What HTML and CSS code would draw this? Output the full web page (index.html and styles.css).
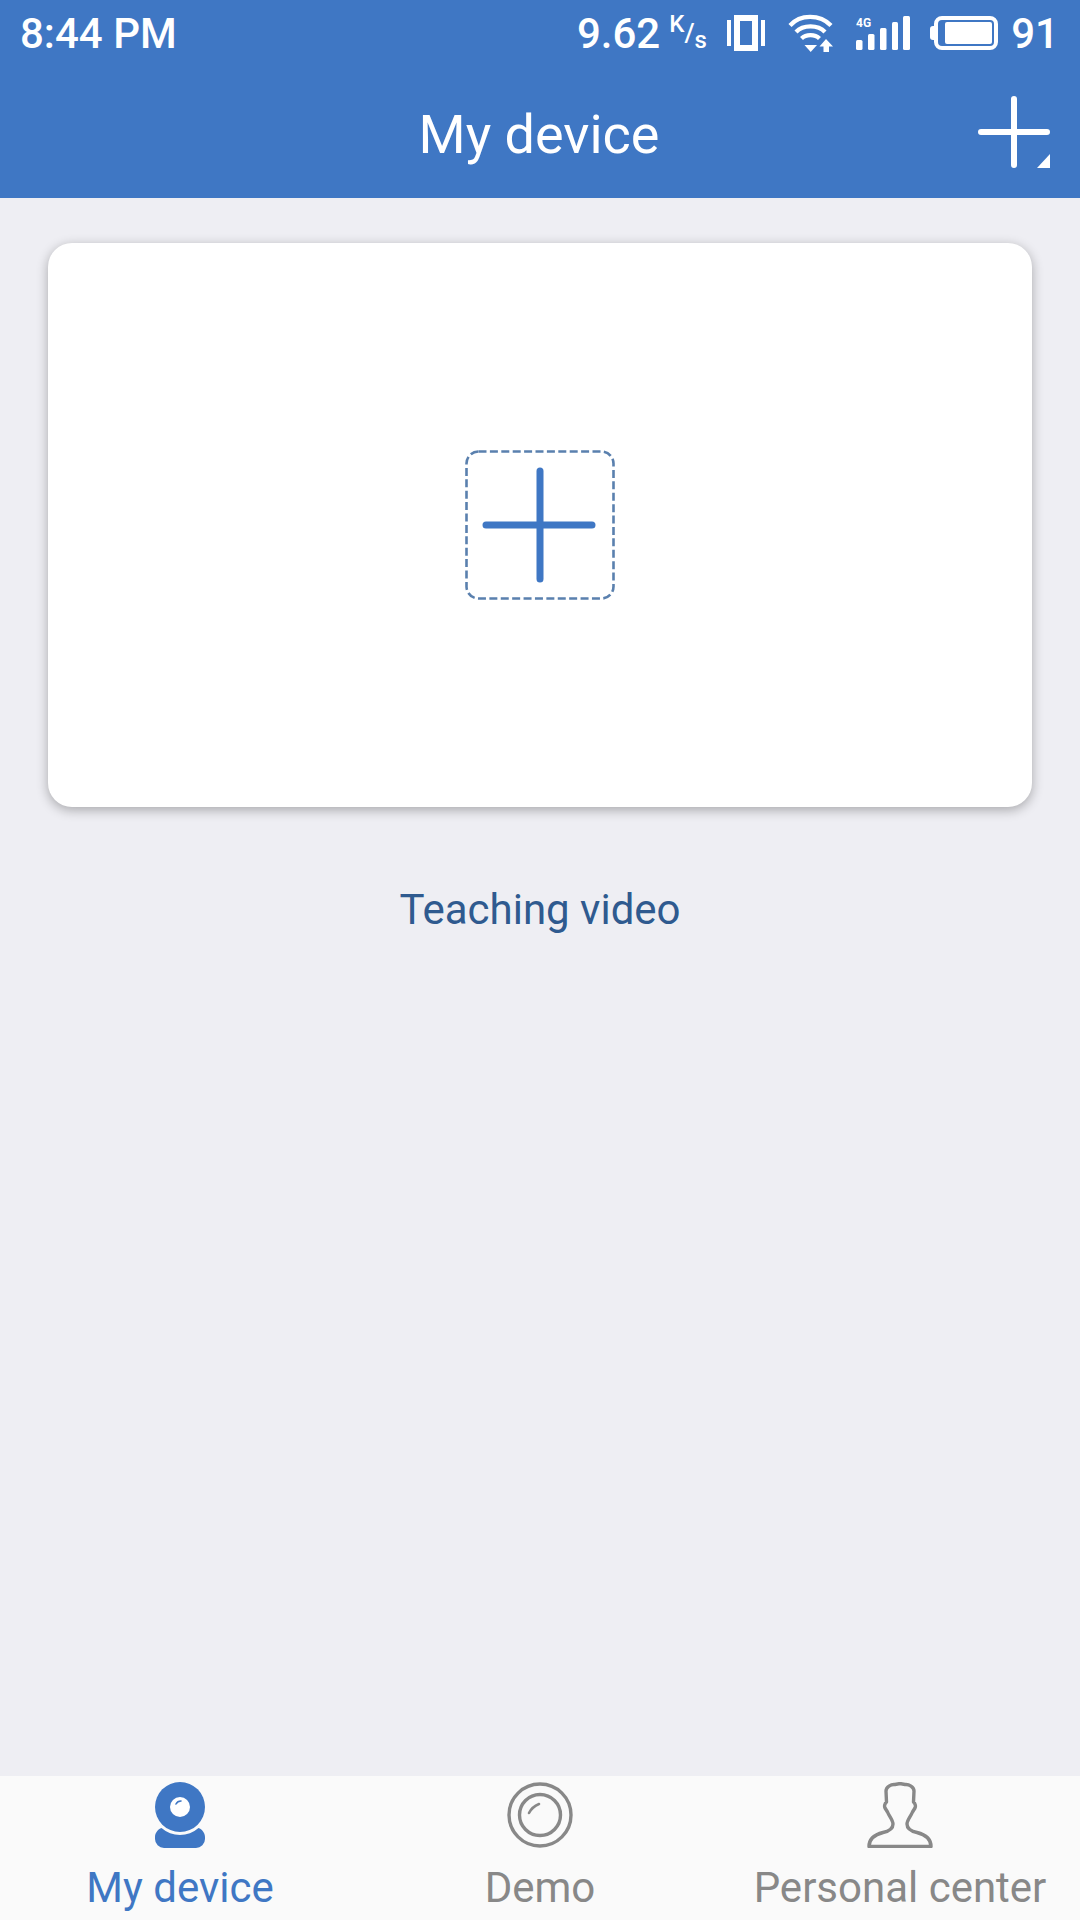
FILE: index.html
```html
<!DOCTYPE html>
<html lang="en">
<head>
    <meta charset="UTF-8">
    <title>My device</title>
    <link rel="stylesheet" href="styles.css">
</head>
<body>
    <div class="app">
        <header class="top">
            <div class="status">
                <span class="time">8:44 PM</span>
                <div class="status-right">
                    <span class="speed">9.62</span>
                    <span class="unit"><sup>K</sup>/<sub>s</sub></span>
                    <svg class="ic-vibrate" width="38" height="36" viewBox="0 0 38 36">
                        <rect x="0" y="5" width="4" height="26" fill="#fff"/>
                        <rect x="10" y="3" width="18" height="30" fill="none" stroke="#fff" stroke-width="6"/>
                        <rect x="34" y="5" width="4" height="26" fill="#fff"/>
                    </svg>
                    <svg class="ic-wifi" width="46" height="38" viewBox="0 0 46 38">
                        <g fill="none" stroke="#fff" stroke-width="4.2">
                            <path d="M2 11.5C12 0 32 0 43 11.5"/>
                            <path d="M8 18C15 10.5 30 10.5 37 18"/>
                            <path d="M13.5 24.5C18 20 27 20 31.5 24.5"/>
                        </g>
                        <path d="M16.5 31H29L22.7 38Z" fill="#fff"/>
                        <path d="M38 25L45 32.5H41V38H35.5V32.5H31.5Z" fill="#fff"/>
                    </svg>
                    <svg class="ic-signal" width="54" height="34" viewBox="0 0 54 34">
                        <text class="ic-4g" x="0" y="11">4G</text>
                        <rect x="0" y="24" width="6.5" height="10" rx="1.5" fill="#fff"/>
                        <rect x="12" y="18" width="6.5" height="16" rx="1.5" fill="#fff"/>
                        <rect x="24" y="12" width="6.5" height="22" rx="1.5" fill="#fff"/>
                        <rect x="36" y="6" width="6" height="28" rx="1.5" fill="#fff"/>
                        <rect x="47" y="0" width="7" height="34" rx="1.5" fill="#fff"/>
                    </svg>
                    <svg class="ic-battery" width="68" height="34" viewBox="0 0 68 34">
                        <path d="M4 10H3A3 3 0 0 0 0 13V21A3 3 0 0 0 3 24H4Z" fill="#fff"/>
                        <rect x="6" y="2" width="60" height="30" rx="6" fill="none" stroke="#fff" stroke-width="4"/>
                        <rect x="15" y="6" width="47" height="22" rx="2" fill="#fff"/>
                    </svg>
                    <span class="level">91</span>
                </div>
            </div>
            <nav class="navbar">
                <h1 class="title">My device</h1>
                <svg class="nav-add" width="72" height="72" viewBox="0 0 72 72">
                    <path d="M36 3V69M3 36H69" fill="none" stroke="#fff" stroke-width="6" stroke-linecap="round"/>
                    <path d="M72 58V72H59Z" fill="#fff"/>
                </svg>
            </nav>
        </header>

        <main class="content">
            <div class="card">
                <svg width="150" height="150" viewBox="0 0 150 150">
                    <rect x="1.5" y="1.5" width="147" height="147" rx="12" fill="none" stroke="#5a80ae" stroke-width="2.6" stroke-dasharray="8 3.4"/>
                    <path d="M75 21V129M21 75H127" fill="none" stroke="#3f77c4" stroke-width="7" stroke-linecap="round"/>
                </svg>
            </div>
            <a class="video-link">Teaching video</a>
        </main>

        <footer class="tabs">
            <div class="tab tab-active">
                <svg width="50" height="66" viewBox="0 0 50 66">
                    <circle cx="25" cy="25" r="25" fill="#3f77c4"/>
                    <circle cx="25" cy="25" r="10" fill="#fff"/>
                    <path d="M21 22C22 20 24 19 26 19" fill="none" stroke="#3f77c4" stroke-width="1.6" stroke-linecap="round"/>
                    <path d="M6.5 46A28 28 0 0 0 43.5 46C47 47 50 51 50 55V57A9 9 0 0 1 41 66H9A9 9 0 0 1 0 57V55C0 51 3 47 6.5 46Z" fill="#3f77c4"/>
                </svg>
                <span class="tab-label">My device</span>
            </div>
            <div class="tab">
                <svg width="66" height="66" viewBox="0 0 66 66">
                    <g fill="none" stroke="#888" stroke-width="3.4">
                        <circle cx="33" cy="33" r="31"/>
                        <circle cx="33" cy="33" r="20.5"/>
                    </g>
                    <path d="M22 31C24 27 27 24 32 22" fill="none" stroke="#888" stroke-width="2.6" stroke-linecap="round"/>
                </svg>
                <span class="tab-label">Demo</span>
            </div>
            <div class="tab">
                <svg width="66" height="66" viewBox="0 0 66 66">
                    <path d="M2 64.5C2 56 8 52.5 16 50.5C23 49 26 46 26 42C26 38 22 34 20.5 30L18 26C17 24 18 21 19.5 20L19 9C19 5 24 2 28 2.5L33 1.5L38 2.5C42 2 47 5 47 9L46.5 20C48 21 49 24 48 26L45.5 30C44 34 40 38 40 42C40 46 43 49 50 50.5C58 52.5 64 56 64 64.5Z" fill="none" stroke="#888" stroke-width="3.4" stroke-linejoin="round"/>
                </svg>
                <span class="tab-label">Personal center</span>
            </div>
        </footer>
    </div>
</body>
</html>
```

FILE: styles.css
```css
/* General Styles */
html, body {
  margin: 0;
  padding: 0;
}

body {
  font-family: Roboto, "Liberation Sans", sans-serif;
  background-color: #eeeef3;
}

.app {
  display: flex;
  flex-direction: column;
  height: 1920px;
}

/* Header */
.top {
  height: 198px;
  background-color: #3f77c4;
  color: #ffffff;
}

.status {
  display: flex;
  align-items: center;
  justify-content: space-between;
  height: 66px;
  padding: 0 21px 0 20px;
}

.time {
  font-size: 42px;
  font-weight: 500;
}

.status-right {
  display: flex;
  align-items: center;
}

.speed,
.level {
  font-size: 42px;
  font-weight: 500;
}

.unit {
  width: 37px;
  margin: 0 21px 0 9px;
  font-size: 26px;
  font-weight: 500;
  line-height: 36px;
  white-space: nowrap;
}

.unit sup,
.unit sub {
  font-size: 24px;
  line-height: 0;
}

.ic-vibrate {
  margin-right: 23px;
}

.ic-wifi {
  margin-right: 22px;
}

.ic-signal {
  margin-right: 20px;
}

.ic-4g {
  font-size: 12px;
  font-weight: 700;
  fill: #ffffff;
}

.ic-battery {
  margin-right: 13px;
}

.navbar {
  display: grid;
  grid-template-columns: 1fr auto 1fr;
  align-items: center;
  height: 132px;
  padding: 0 30px;
}

.title {
  grid-column: 2;
  margin: 4px 2px 0 0;
  font-size: 54px;
  font-weight: 400;
}

.nav-add {
  grid-column: 3;
  justify-self: end;
}

/* Content */
.content {
  display: flex;
  flex: 1;
  flex-direction: column;
  align-items: center;
  padding: 45px 48px 0;
}

.card {
  display: flex;
  align-items: center;
  justify-content: center;
  width: 100%;
  height: 564px;
  background-color: #ffffff;
  border-radius: 24px;
  box-shadow: 0 3px 12px rgba(0, 0, 0, 0.3);
}

.video-link {
  margin-top: 78px;
  font-size: 42px;
  line-height: 50px;
  color: #2f5a8f;
}

/* Bottom tabs */
.tabs {
  display: grid;
  grid-template-columns: repeat(3, 1fr);
  height: 144px;
  background-color: #fafafa;
}

.tab {
  display: flex;
  flex-direction: column;
  align-items: center;
  padding-top: 6px;
  color: #888888;
}

.tab-label {
  margin-top: 16px;
  font-size: 42px;
  line-height: 48px;
  white-space: nowrap;
}

.tab-active {
  color: #3f77c4;
}
```
